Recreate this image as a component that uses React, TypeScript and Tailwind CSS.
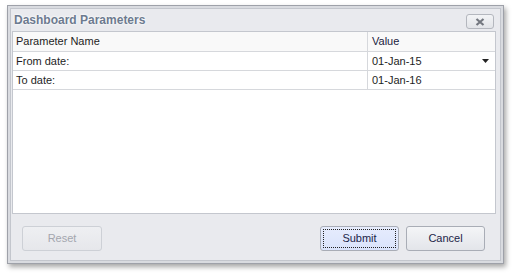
import React from "react";

export default function App() {
  const font = { fontFamily: '"Liberation Sans", Arial, sans-serif' };
  return (
    <div className="w-[514px] h-[280px] bg-white pl-[7px] pt-[5px]" style={font}>
      <div className="w-[497px] h-[259px] border border-[#9ea1a9] bg-[#d9dbe0] p-[2px] shadow-[2px_3px_5px_rgba(0,0,0,0.35)] flex flex-col">
        <div className="flex-1 flex flex-col bg-[#e9eaee] border border-[#c3c6cd] pl-px pr-[4px]">
          {/* title */}
          <div className="h-[22px] flex items-center justify-between shrink-0">
            <span
              className="pl-[2px] text-[12px] font-bold text-[#6c7a8f]"
              style={{ textShadow: "0 0 2px #fff, 0 0 3px #fff" }}
            >
              Dashboard Parameters
            </span>
            <div className="mt-[3px] mr-[2px] w-[28px] h-[15px] rounded-[3px] border border-[#b4b7be] bg-gradient-to-b from-[#f3f4f6] to-[#e2e4e8] flex items-center justify-center">
              <svg width="10" height="8" viewBox="0 0 10 8">
                <path d="M1.5 1 L8.5 7 M8.5 1 L1.5 7" stroke="#73777f" strokeWidth="2.2" />
              </svg>
            </div>
          </div>
          {/* grid */}
          <div className="h-[183px] shrink-0 bg-white border border-[#c4c7ce] text-[11px] text-[#1e1e1e] flex flex-col">
            <div className="h-[20px] flex border-b border-[#d6d8dc] bg-[#f9f9f9]">
              <div className="w-[355px] border-r border-[#d6d8dc] pl-[3px] flex items-center">Parameter Name</div>
              <div className="flex-1 pl-[4px] flex items-center text-[#1b2240]">Value</div>
            </div>
            <div className="h-[19px] flex border-b border-[#d6d8dc]">
              <div className="w-[355px] border-r border-[#d6d8dc] pl-[3px] flex items-center">From date:</div>
              <div className="flex-1 pl-[4px] pr-[6px] flex items-center justify-between">
                <span>01-Jan-15</span>
                <svg width="7" height="4" viewBox="0 0 7 4">
                  <path d="M0 0 H7 L3.5 4 Z" fill="#222" />
                </svg>
              </div>
            </div>
            <div className="h-[19px] flex border-b border-[#d6d8dc]">
              <div className="w-[355px] border-r border-[#d6d8dc] pl-[3px] flex items-center">To date:</div>
              <div className="flex-1 pl-[4px] flex items-center">01-Jan-16</div>
            </div>
          </div>
          {/* footer */}
          <div className="flex-1 flex items-start pt-[12px] pl-[10px] pr-[11px] text-[11px]">
            <button className="w-[80px] h-[25px] rounded-[3px] border border-[#cdd0d6] bg-gradient-to-b from-[#eeeff2] to-[#e6e7eb] text-[#a3a6ae]">
              Reset
            </button>
            <div className="flex-1" />
            <button className="w-[79px] h-[25px] rounded-[3px] border border-[#a9adb6] bg-gradient-to-b from-[#e6ecfd] to-[#dae3fb] text-[#1c2548] p-[2px]">
              <div className="w-full h-full border border-dotted border-[#222] flex items-center justify-center">Submit</div>
            </button>
            <button className="ml-[7px] w-[79px] h-[25px] rounded-[3px] border border-[#a9adb6] bg-gradient-to-b from-[#f4f5f7] to-[#e3e5ea] text-[#1c2548]">
              Cancel
            </button>
          </div>
        </div>
      </div>
    </div>
  );
}
